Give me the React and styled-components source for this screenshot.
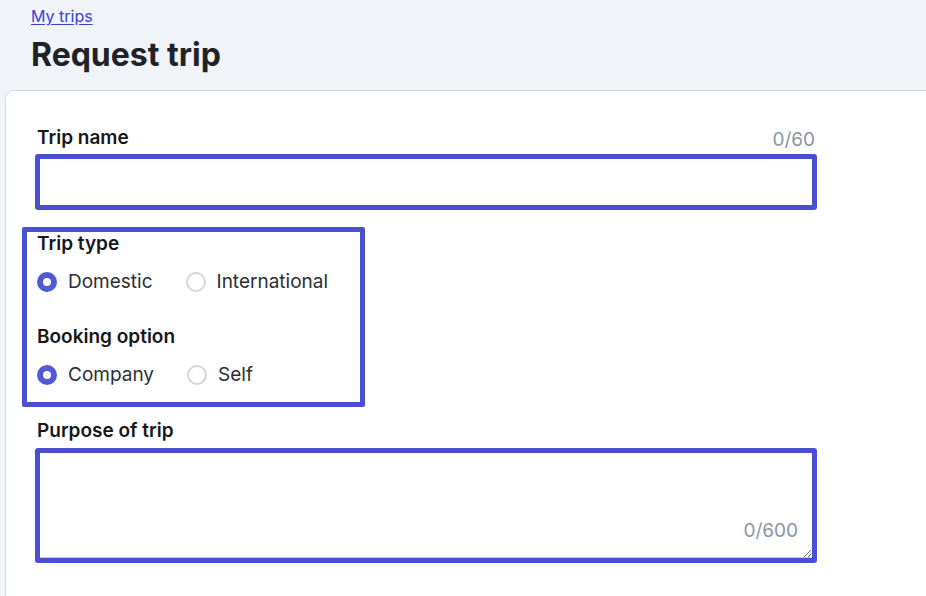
import React from 'react';
import styled, { createGlobalStyle } from 'styled-components';

const Global = createGlobalStyle`
  html, body { margin: 0; padding: 0; background: #f0f3f8; overflow: hidden; }
  body { font-family: Inter, "Noto Sans", Arial, sans-serif; }
  * { box-sizing: border-box; }
`;

const Page = styled.div`
  width: 926px;
  height: 596px;
  overflow: hidden;
  display: flex;
  flex-direction: column;
`;

const Header = styled.header`
  padding: 4px 0 15px 31px;
  display: flex;
  flex-direction: column;
  align-items: flex-start;
  gap: 7px;
`;

const BackLink = styled.a`
  font-size: 16px;
  line-height: 24px;
  color: #3c41d6;
  text-decoration: underline;
  text-underline-offset: 2px;
`;

const Title = styled.h1`
  margin: 0;
  font-size: 32px;
  line-height: 40px;
  font-weight: 700;
  color: #1f2328;
`;

const Card = styled.main`
  margin-left: 5px;
  width: 960px;
  height: 560px;
  flex: none;
  background: #fff;
  border: 1px solid #d5dae2;
  border-radius: 8px 0 0 0;
  padding: 35px 0 0 29px;
`;

const Form = styled.form`
  width: 782px;
  display: flex;
  flex-direction: column;
`;

const Field = styled.div`
  display: flex;
  flex-direction: column;
  gap: ${p => p.$gap || 4}px;
  margin-top: ${p => p.$top || 0}px;
`;

const LabelRow = styled.div`
  display: flex;
  justify-content: space-between;
  align-items: flex-end;
  padding: 0 2px;
`;

const Label = styled.label`
  font-size: 19px;
  line-height: 24px;
  font-weight: 600;
  color: #15171b;
`;

const Counter = styled.span`
  font-size: 19px;
  line-height: 20px;
  color: #8a94a6;
`;

const TextInput = styled.input`
  width: 100%;
  height: 56px;
  border: 5px solid #4a4fd1;
  border-radius: 3px;
  outline: none;
  padding: 0 12px;
  font: inherit;
  font-size: 19px;
  background: #fff;
`;

const Group = styled.div`
  margin: 17px 0 0 -13px;
  width: 343px;
  height: 180px;
  border: 5px solid #4a4fd1;
  border-radius: 2px;
  padding: 0 10px;
  display: flex;
  flex-direction: column;
`;

const GroupLabel = styled.div`
  font-size: 19px;
  line-height: 24px;
  font-weight: 600;
  color: #15171b;
  margin-top: ${p => p.$top || 0}px;
`;

const RadioRow = styled.div`
  display: flex;
  gap: 33px;
  margin-top: 14px;
  height: 24px;
  align-items: center;
`;

const Option = styled.label`
  display: inline-flex;
  align-items: center;
  gap: 11px;
  font-size: 19px;
  line-height: 24px;
  color: #2a2e35;
`;

const RadioInput = styled.input.attrs({ type: 'radio' })`
  appearance: none;
  -webkit-appearance: none;
  margin: 0;
  width: 20px;
  height: 20px;
  flex: none;
  border-radius: 50%;
  border: 2px solid #d1d5dc;
  background: #fff;
  &:checked {
    border: 6.5px solid #4f5ad6;
  }
`;

const TextArea = styled.textarea`
  display: block;
  width: 100%;
  height: 115px;
  border: 5px solid #4a4fd1;
  border-radius: 3px;
  outline: none;
  resize: vertical;
  padding: 10px 12px;
  font: inherit;
  font-size: 19px;
  background: #fff;
  box-shadow: inset 0 -1px 0 #c4c7d0;
`;

const AreaWrap = styled.div`
  position: relative;
`;

const AreaCounter = styled.span`
  position: absolute;
  right: 19px;
  bottom: 20px;
  font-size: 19px;
  line-height: 24px;
  color: #8a94a6;
  pointer-events: none;
`;

function Radio({ name, label, checked }) {
  return (
    <Option>
      <RadioInput name={name} defaultChecked={checked} />
      {label}
    </Option>
  );
}

export default function App() {
  return (
    <Page>
      <Global />
      <Header>
        <BackLink href="#">My trips</BackLink>
        <Title>Request trip</Title>
      </Header>
      <Card>
        <Form onSubmit={e => e.preventDefault()}>
          <Field>
            <LabelRow>
              <Label htmlFor="trip-name">Trip name</Label>
              <Counter>0/60</Counter>
            </LabelRow>
            <TextInput id="trip-name" />
          </Field>
          <Group role="group">
            <GroupLabel>Trip type</GroupLabel>
            <RadioRow>
              <Radio name="type" label="Domestic" checked />
              <Radio name="type" label="International" />
            </RadioRow>
            <GroupLabel $top={31}>Booking option</GroupLabel>
            <RadioRow>
              <Radio name="booking" label="Company" checked />
              <Radio name="booking" label="Self" />
            </RadioRow>
          </Group>
          <Field $top={12} $gap={5}>
            <LabelRow>
              <Label htmlFor="purpose">Purpose of trip</Label>
            </LabelRow>
            <AreaWrap>
              <TextArea id="purpose" />
              <AreaCounter>0/600</AreaCounter>
            </AreaWrap>
          </Field>
        </Form>
      </Card>
    </Page>
  );
}
